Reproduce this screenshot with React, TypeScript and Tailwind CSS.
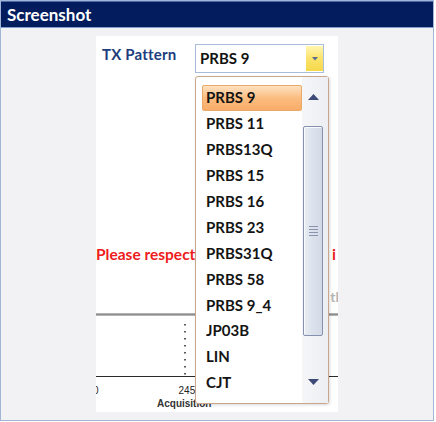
import React from "react";

const items = [
  "PRBS 9",
  "PRBS 11",
  "PRBS13Q",
  "PRBS 15",
  "PRBS 16",
  "PRBS 23",
  "PRBS31Q",
  "PRBS 58",
  "PRBS 9_4",
  "JP03B",
  "LIN",
  "CJT",
];

export default function App() {
  return (
    <div className="w-[436px] h-[422px] bg-white" style={{ fontFamily: "Lato, 'Noto Sans', sans-serif" }}>
      <div className="w-[434px] h-[421px] flex flex-col border border-[#a3b5d6]">
        <div className="h-[27px] bg-[#021c5e] border-t border-[#4d6aa6] border-b border-b-[#7f9ccc] flex items-center pl-[6px]">
          <span className="text-white font-bold text-[17px] leading-none">Screenshot</span>
        </div>
        <div className="flex-1 bg-[#f2f2f4] pl-[95px] pt-[8px]">
          <div className="relative w-[242px] h-[376px] bg-white overflow-hidden">
            {/* TX Pattern row */}
            <div className="flex pt-[8px]">
              <div className="w-[99px] pl-[6px] pt-[1px] text-[15px] leading-[18px] font-bold text-[#203d7d] tracking-[0.2px]">
                TX Pattern
              </div>
              <div className="w-[129px] h-[29px] border border-[#a9bcd9] bg-white flex items-center justify-between">
                <span className="pl-[4px] text-[15px] font-bold text-[#111] leading-none">PRBS 9</span>
                <div className="w-[17px] h-[25px] bg-gradient-to-b from-[#fff6b0] via-[#fbe36a] to-[#f6d84a] flex items-center justify-center">
                  <svg width="6" height="4" viewBox="0 0 6 4">
                    <polygon points="0,0 6,0 3,3.5" fill="#5c6c8e" />
                  </svg>
                </div>
              </div>
            </div>

            {/* Red message */}
            <div className="mt-[172px] flex justify-between pr-[2px] text-[15.5px] leading-[18px] font-bold text-[#ee1c1c]">
              <span>Please respect</span>
              <span>i</span>
            </div>

            {/* gray label */}
            <div className="mt-[25px] flex justify-end text-[14px] leading-[18px] font-bold text-[#b4b4b4]">
              <span className="mr-[-1px]">tl</span>
            </div>

            {/* gray separator */}
            <div className="mt-[7px] h-[3px] bg-gradient-to-b from-[#c4c4c4] via-[#8e8e8e] to-[#c8c8c8]" />

            {/* chart */}
            <div className="h-[8px]" />
            <div className="h-[52px] pl-[88px]">
              <svg width="2" height="52" viewBox="0 0 2 52">
                <line x1="1" y1="0" x2="1" y2="52" stroke="#222" strokeWidth="1.5" strokeDasharray="1.5 5.5" />
              </svg>
            </div>
            <div className="h-px bg-[#2a2a2a]" />
            <div className="h-[21px] text-[10px] leading-[12px] text-[#222]" style={{ fontFamily: "'Liberation Sans', Arial, sans-serif" }}>
              <div className="flex pt-[8px]">
                <span className="ml-[-3px]">0</span>
                <span className="ml-[80px]">245</span>
              </div>
            </div>
            <div className="pl-[61px] text-[10px] leading-[12px] font-bold text-[#333]" style={{ fontFamily: "'Liberation Sans', Arial, sans-serif" }}>
              Acquisition
            </div>

            {/* Dropdown list */}
            <div className="absolute left-[99px] top-[40px] w-[134px] h-[328px] rounded-[3px] border border-[#c9a68c] bg-white shadow-[1px_1px_3px_rgba(0,0,0,0.15)] flex">
              <div className="w-[106px] pl-[6px] pt-[8px] flex flex-col">
                {items.map((it, i) => (
                  <div
                    key={it}
                    className={
                      i === 0
                        ? "h-[25.9px] w-[100px] flex items-center pl-[3px] rounded-[2px] border border-[#e9a96a] bg-gradient-to-b from-[#fde1c0] via-[#fbbd80] to-[#f9ac68]"
                        : "h-[25.9px] w-[100px] flex items-center pl-[4px]"
                    }
                  >
                    <span className="text-[15px] font-bold text-[#141414] leading-none">{it}</span>
                  </div>
                ))}
              </div>
              <div className="w-[26px] h-full bg-gradient-to-r from-[#f6f6f8] to-[#eceef2] flex flex-col pt-[17px] pl-px">
                <div className="w-[20px] flex justify-center">
                  <svg width="11" height="6" viewBox="0 0 11 6">
                    <polygon points="5.5,0 11,6 0,6" fill="#3d4a78" />
                  </svg>
                </div>
                <div className="mt-[26px] w-[20px] h-[210px] rounded-[2px] border border-[#8691b0] bg-gradient-to-r from-[#e9edf3] via-[#dbe2ec] to-[#d3dae6] flex items-center justify-center shadow-[inset_1px_1px_0_#f8fafc]">
                  <div className="flex flex-col gap-[2px]">
                    <div className="w-[9px] h-px bg-[#8a94ac]" />
                    <div className="w-[9px] h-px bg-[#8a94ac]" />
                    <div className="w-[9px] h-px bg-[#8a94ac]" />
                    <div className="w-[9px] h-px bg-[#8a94ac]" />
                  </div>
                </div>
                <div className="mt-[43px] w-[20px] flex justify-center">
                  <svg width="11" height="6" viewBox="0 0 11 6">
                    <polygon points="0,0 11,0 5.5,6" fill="#3d4a78" />
                  </svg>
                </div>
              </div>
            </div>
          </div>
        </div>
      </div>
    </div>
  );
}
